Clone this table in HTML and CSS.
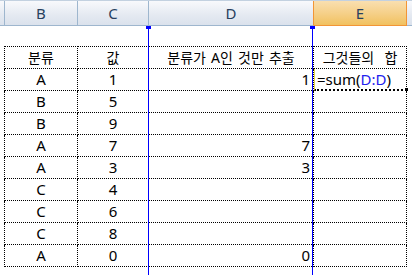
FILE: index.html
```html
<!DOCTYPE html>
<html lang="ko">
<head>
<meta charset="utf-8">
<link rel="stylesheet" href="styles.css">
</head>
<body>
<div class="sheet">
  <div class="colhead">
    <div class="ch stub"></div>
    <div class="ch cb">B</div>
    <div class="ch cc">C</div>
    <div class="ch cd">D</div>
    <div class="ch ce sel">E</div>
    <div class="ch cf"></div>
  </div>
  <div class="spacer"></div>
  <div class="grid">
    <div class="stub"></div><div class="cell b first top">분류</div><div class="cell c top">값</div><div class="cell d top hd">분류가 A인 것만 추출</div><div class="cell e top">그것들의&nbsp;&nbsp;합</div><div></div>
    <div class="stub"></div><div class="cell b first">A</div><div class="cell c">1</div><div class="cell d">1</div><div class="cell e active"><span>=sum(</span><span class="ref">D:D</span><span>)</span><i class="handle"></i></div><div></div>
    <div class="stub"></div><div class="cell b first">B</div><div class="cell c">5</div><div class="cell d"></div><div class="cell e"></div><div></div>
    <div class="stub"></div><div class="cell b first">B</div><div class="cell c">9</div><div class="cell d"></div><div class="cell e"></div><div></div>
    <div class="stub"></div><div class="cell b first">A</div><div class="cell c">7</div><div class="cell d">7</div><div class="cell e"></div><div></div>
    <div class="stub"></div><div class="cell b first">A</div><div class="cell c">3</div><div class="cell d">3</div><div class="cell e"></div><div></div>
    <div class="stub"></div><div class="cell b first">C</div><div class="cell c">4</div><div class="cell d"></div><div class="cell e"></div><div></div>
    <div class="stub"></div><div class="cell b first">C</div><div class="cell c">6</div><div class="cell d"></div><div class="cell e"></div><div></div>
    <div class="stub"></div><div class="cell b first">C</div><div class="cell c">8</div><div class="cell d"></div><div class="cell e"></div><div></div>
    <div class="stub"></div><div class="cell b first">A</div><div class="cell c">0</div><div class="cell d">0</div><div class="cell e"></div><div></div>
  </div>
  <div class="pb pb1"><i></i></div>
  <div class="pb pb2"><i></i></div>
</div>
</body>
</html>
```
FILE: styles.css
```css
* { box-sizing: border-box; }
html, body { margin: 0; padding: 0; background: #fff; }
body { width: 412px; height: 275px; overflow: hidden; font-family: "Noto Sans", "Noto Sans CJK KR", sans-serif; color: #000; }
.sheet { position: relative; width: 412px; height: 275px; }

.colhead { display: flex; height: 26px; border-top: 1px solid #c3d1e0; }
.ch {
  height: 25px;
  background: linear-gradient(#f8f9fc, #e4e9f1 60%, #dbe2ec);
  border-right: 1px solid #9eb6ce;
  border-bottom: 1px solid #9eb6ce;
  display: flex; align-items: center; justify-content: center;
  font-size: 15px; color: #27405e;
}
.ch.stub { width: 5px; }
.ch.cb { width: 73px; }
.ch.cc { width: 71px; }
.ch.cd { width: 165px; border-right-color: #f29536; }
.ch.ce { width: 93px; border-right-color: #f29536; border-bottom-color: #f29536; }
.ch.cf { flex: 1; border-right: none; }
.ch.sel { background: linear-gradient(#f9dfb0, #f5cf86 55%, #f1c15f); }

.spacer { height: 20px; }

.grid {
  display: grid;
  grid-template-columns: 4px 74px 71px 165px 93px 1fr;
  grid-auto-rows: 22px;
  grid-template-rows: 23px;
}
.cell {
  border-right: 1px dotted #000;
  border-bottom: 1px dotted #000;
  display: flex; align-items: center; justify-content: center;
  font-size: 15px; line-height: 1;
  position: relative;
  white-space: nowrap;
}
.cell.first { border-left: 1px dotted #000; }
.cell.top { border-top: 1px dotted #000; font-size: 14px; word-spacing: 1.5px; }
.cell.d { justify-content: flex-end; padding-right: 3px; }
.cell.d.hd { justify-content: center; padding-right: 0; }
.cell.e.active { justify-content: flex-start; padding-left: 2px; border-left: 1px solid #e8d84a; border-bottom: 2px dotted #000; }
.ref { color: #2222ee; }
.handle { position: absolute; right: -3px; bottom: -3px; width: 5px; height: 5px; background: #000; border: 1px solid #fff; }

.pb { position: absolute; top: 26px; bottom: 0; width: 1px; background: #0000ff; }
.pb1 { left: 148px; }
.pb2 { left: 312px; }
.pb i { position: absolute; left: -2px; top: 0; width: 5px; height: 3px; background: #0000ff; }
```
